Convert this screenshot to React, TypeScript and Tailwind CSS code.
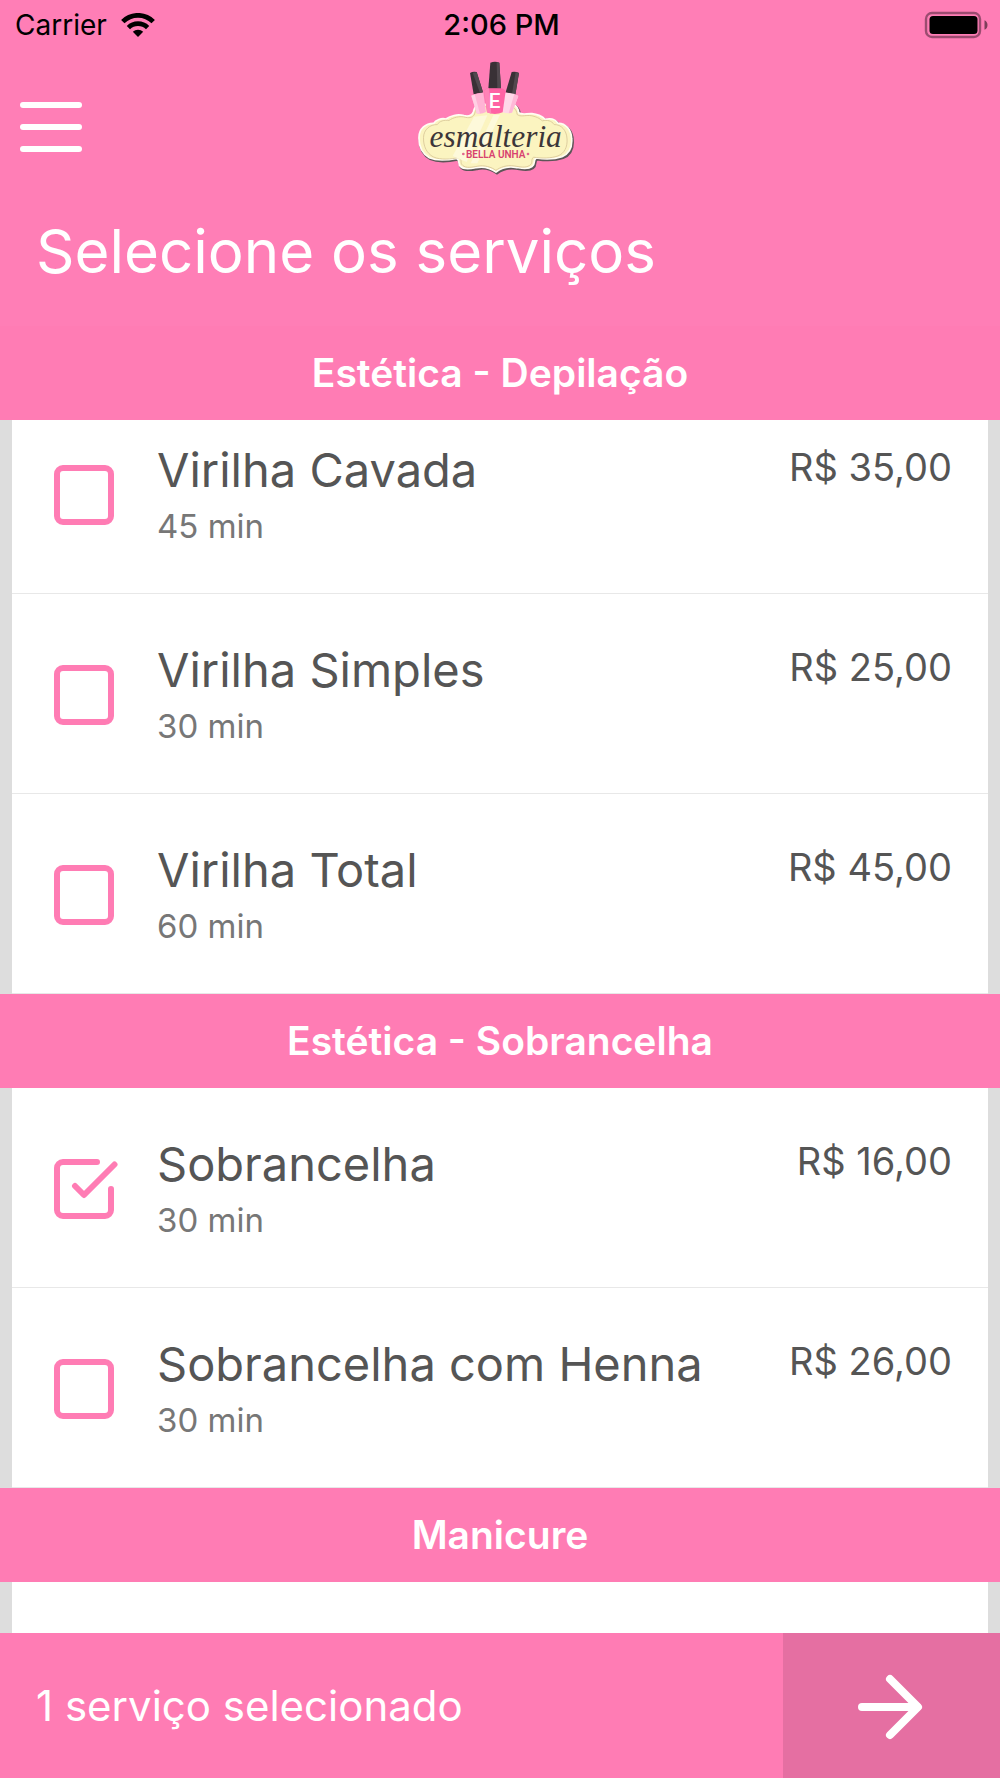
import { useState } from "react";

type Service = { id: string; name: string; duration: string; price: string };
type Section = { title: string; services: Service[] };

const sections: Section[] = [
  {
    title: "Estética - Depilação",
    services: [
      { id: "cavada", name: "Virilha Cavada", duration: "45 min", price: "R$ 35,00" },
      { id: "simples", name: "Virilha Simples", duration: "30 min", price: "R$ 25,00" },
      { id: "total", name: "Virilha Total", duration: "60 min", price: "R$ 45,00" },
    ],
  },
  {
    title: "Estética - Sobrancelha",
    services: [
      { id: "sobrancelha", name: "Sobrancelha", duration: "30 min", price: "R$ 16,00" },
      { id: "henna", name: "Sobrancelha com Henna", duration: "30 min", price: "R$ 26,00" },
    ],
  },
  { title: "Manicure", services: [] },
];

function WifiIcon() {
  return (
    <svg width="34" height="24" viewBox="0 0 34 24" fill="none" aria-hidden="true">
      <path d="M1.8 8.6a21.6 21.6 0 0 1 30.4 0" stroke="#000" strokeWidth="4.8" />
      <path d="M7.4 14.6a13.6 13.6 0 0 1 19.2 0" stroke="#000" strokeWidth="4.6" />
      <path d="M17 24l-5.2-5.2a7.4 7.4 0 0 1 10.4 0z" fill="#000" />
    </svg>
  );
}

function BatteryIcon() {
  return (
    <svg width="64" height="28" viewBox="0 0 64 28" fill="none" aria-hidden="true">
      <rect x="2" y="2" width="54" height="24" rx="6" stroke="#9b4c70" strokeWidth="2.4" />
      <rect x="5.5" y="5" width="48" height="18" rx="3.5" fill="#000" />
      <path d="M60.5 9.200c4 1.400 4 8.200 0 9.600z" fill="#7d3e5a" />
    </svg>
  );
}

const plaque =
  "M57 262C57 236 78 219 101 220C107 209 124 204 138 207C150 198 172 191 192 197C206 200 216 196 220 186C222 176 226 168 234 163L340 163C350 168 355 178 356 188C366 196 380 190 396 191C416 193 428 201 436 208C452 204 466 208 474 220C496 219 514 238 515 266C517 292 506 312 486 320C462 328 436 328 408 324C398 332 408 342 396 350C382 360 362 354 346 352C322 348 302 356 288 366C274 356 252 348 228 353C212 356 192 360 182 350C172 342 182 332 170 325C146 330 112 334 88 323C68 312 56 290 57 262Z";

function Logo() {
  return (
    <svg width="200" height="135" viewBox="0 0 600 405" role="img" aria-label="Esmalteria Bella Unha">
      <path d={plaque} fill="#5d5558" transform="translate(3 4)" stroke="#5d5558" strokeWidth="7" />
      <path d={plaque} fill="#fbf4c0" stroke="#fffdf4" strokeWidth="5" />
      <path d={plaque} fill="none" stroke="#dccb9c" strokeWidth="3" transform="translate(17 17) scale(0.94)" />
      <path d="M222 200L262 196L200 336L158 318Z" fill="#fdf9da" />
      <path d="M280 196L300 194L232 340L212 340Z" fill="#fdf9da" />
      <path d="M210 69Q219 63 230 66L249 127L221 133Z" fill="#393136" />
      <path d="M218 68L230 66L249 127L240 129Z" fill="#51484e" />
      <path d="M214 137Q232 128 250 128L258 186Q244 194 230 190Z" fill="#ffb3d4" />
      <path d="M214 137L224 133L240 191L230 190Z" fill="#ffd0e4" />
      <path d="M335 66Q346 63 357 69L346 134L317 127Z" fill="#393136" />
      <path d="M347 66L357 69L346 134L336 132Z" fill="#51484e" />
      <path d="M314 128Q338 128 355 138L336 188Q322 192 306 186Z" fill="#ffd7e8" />
      <path d="M343 132L355 138L336 188L326 190Z" fill="#ffb9d7" />
      <path d="M271 38Q285 33 298 38L303 116H265Z" fill="#393136" />
      <path d="M290 36L298 38L303 116H292Z" fill="#51484e" />
      <path d="M252 124Q256 115 267 115H301Q312 115 317 124L308 187Q285 197 261 187Z" fill="#ff62a4" />
      <path d="M252 124Q256 115 267 115L274 191Q266 190 261 187Z" fill="#ff83b7" />
      <text x="284" y="175" textAnchor="middle" fill="#ffffff" fontSize="62" className="font-[Roboto,sans-serif]" fontWeight="500">E</text>
      <text x="287" y="290" textAnchor="middle" fill="#3c3639" fontSize="94" fontStyle="italic" className="font-['Liberation_Serif',serif]">esmalteria</text>
      <text x="287" y="324" textAnchor="middle" fill="#d8416f" fontSize="30" fontWeight="600" className="font-[Roboto,sans-serif]">BELLA UNHA</text>
      <circle cx="190" cy="312" r="4" fill="#e0688c" />
      <circle cx="384" cy="312" r="4" fill="#e0688c" />
    </svg>
  );
}

function CheckIcon({ checked }: { checked: boolean }) {
  return (
    <svg
      width="64"
      height="60"
      viewBox="0 0 64 60"
      fill="none"
      stroke="#ff7cb4"
      strokeWidth="6"
      strokeLinecap="round"
      strokeLinejoin="round"
      className="pointer-events-none mt-[23px] self-start"
      aria-hidden="true"
    >
      {checked ? (
        <>
          <path d="M43 3H9a6 6 0 0 0-6 6v42a6 6 0 0 0 6 6h42a6 6 0 0 0 6-6V30" />
          <path d="M21 27L30 36L60.500 5.500" />
        </>
      ) : (
        <rect x="3" y="3" width="54" height="54" rx="6" />
      )}
    </svg>
  );
}

function ServiceRow({ service, checked, onToggle }: { service: Service; checked: boolean; onToggle: () => void }) {
  return (
    <li className="border-b border-[#e8e8e8]">
      <label htmlFor={service.id} className="flex cursor-pointer pt-12 pr-9 pb-[39px] pl-[42px]">
        <input id={service.id} type="checkbox" checked={checked} onChange={onToggle} className="sr-only" />
        <CheckIcon checked={checked} />
        <span className="ml-[39px] flex flex-1 flex-col">
          <span className="text-[47px] leading-[56px] text-[#555555]">{service.name}</span>
          <span className="text-[33px] leading-[56px] text-[#777777]">{service.duration}</span>
        </span>
        <span className="self-start text-[38px] leading-[50px] text-[#555555]">{service.price}</span>
      </label>
    </li>
  );
}

export default function App() {
  const [selected, setSelected] = useState<string[]>(["sobrancelha"]);
  const toggle = (id: string) =>
    setSelected((cur) => (cur.includes(id) ? cur.filter((x) => x !== id) : [...cur, id]));

  return (
    <div className="flex h-screen flex-col overflow-hidden bg-[#dddddd] font-[Inter,sans-serif]">
      <header className="shrink-0 bg-[#ff7eb6] text-white">
        <div className="grid h-[50px] grid-cols-3 items-center pr-3 pl-[15px] text-black">
          <div className="flex items-center gap-[14px] text-[28px]">
            <span>Carrier</span>
            <WifiIcon />
          </div>
          <span className="text-center text-[29px] font-medium">2:06 PM</span>
          <div className="flex justify-end">
            <BatteryIcon />
          </div>
        </div>
        <div className="grid grid-cols-[1fr_auto_1fr] items-center px-5">
          <button type="button" aria-label="Menu" className="mt-[19px] flex w-[62px] cursor-pointer flex-col gap-4">
            <span className="h-[6px] rounded-full bg-white" />
            <span className="h-[6px] rounded-full bg-white" />
            <span className="h-[6px] rounded-full bg-white" />
          </button>
          <Logo />
        </div>
        <h1 className="px-9 pt-7 pb-[37px] text-[60px] leading-[76px]">Selecione os serviços</h1>
      </header>

      <main className="min-h-0 flex-1 overflow-hidden">
        {sections.map((section, i) => (
          <section key={section.title}>
            <h2 className="relative z-10 bg-[#ff7cb4] py-5 text-center text-[39px] leading-[54px] font-semibold text-white">
              {section.title}
            </h2>
            <ul className={`mx-3 min-h-[100px] bg-white ${i === 0 ? "-mt-[26px]" : ""}`}>
              {section.services.map((s) => (
                <ServiceRow key={s.id} service={s} checked={selected.includes(s.id)} onToggle={() => toggle(s.id)} />
              ))}
            </ul>
          </section>
        ))}
      </main>

      <footer className="flex h-[145px] shrink-0 bg-[#ff7cb4] text-white">
        <p className="flex flex-1 items-center pl-9 text-[42px]">
          {selected.length} {selected.length === 1 ? "serviço selecionado" : "serviços selecionados"}
        </p>
        <button type="button" aria-label="Continuar" className="flex w-[217px] cursor-pointer items-center justify-center bg-[#e56fa2] pt-[2px] pr-1">
          <svg width="66" height="66" viewBox="0 0 66 66" fill="none" stroke="#fff" strokeWidth="8" strokeLinecap="round" strokeLinejoin="round" aria-hidden="true">
            <path d="M5 33H60" />
            <path d="M33 5L61 33L33 61" />
          </svg>
        </button>
      </footer>
    </div>
  );
}
